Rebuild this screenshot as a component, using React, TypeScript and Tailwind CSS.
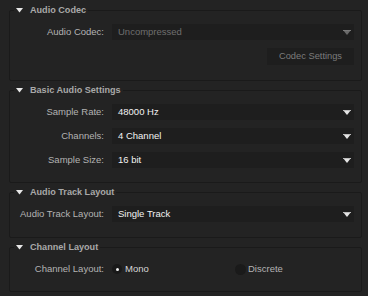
import React from "react";

const font = { fontFamily: '"Liberation Sans", Arial, sans-serif' };

function Tri() {
  return (
    <svg width="7" height="5" viewBox="0 0 7 5" className="shrink-0">
      <polygon points="0,0 7,0 3.5,4.5" fill="#e8e8e8" />
    </svg>
  );
}

function Arrow({ disabled }: { disabled?: boolean }) {
  return (
    <svg width="8" height="5" viewBox="0 0 8 5" className="shrink-0">
      <polygon points="0,0 8,0 4,5" fill={disabled ? "#6a6a6a" : "#e4e4e4"} />
      <rect x="0" y="0" width="8" height="1" fill={disabled ? "#7a7a7a" : "#bdbdbd"} />
    </svg>
  );
}

function Group({ title, children, pb }: { title: string; children: React.ReactNode; pb: string }) {
  return (
    <div className="border border-[#1a1a1a] rounded-[2px]">
      <div className="-mt-[7px] ml-[4px] flex w-fit items-center gap-[7px] bg-[#232323] px-[2px] h-[13px]">
        <Tri />
        <span className="text-[9.1px] font-bold text-[#a9a9a9] leading-[13px]">{title}</span>
      </div>
      <div className={"flex flex-col gap-2 pt-[7px] pr-[7px] " + pb}>{children}</div>
    </div>
  );
}

function Row({ label, children }: { label: string; children: React.ReactNode }) {
  return (
    <div className="flex items-center h-[16px]">
      <div className="w-[94px] shrink-0 text-right text-[9.5px] text-[#b3b3b3]">{label}</div>
      <div className="ml-2 flex-1 h-full">{children}</div>
    </div>
  );
}

function Select({ value, disabled }: { value: string; disabled?: boolean }) {
  return (
    <div className="flex h-full items-center justify-between bg-[#1e1e1e] pl-[6px] pr-[3px]">
      <span className={disabled ? "text-[9.5px] text-[#6f6f6f]" : "text-[9.5px] text-[#f2f2f2]"}>
        {value}
      </span>
      <Arrow disabled={disabled} />
    </div>
  );
}

export default function App() {
  return (
    <div className="w-[368px] h-[296px] bg-[#232323] pt-[10px] pl-[9px] pr-[6px]" style={font}>
      <div className="flex flex-col gap-[9px]">
        <Group title="Audio Codec" pb="pb-[15px]">
          <Row label="Audio Codec:">
            <Select value="Uncompressed" disabled />
          </Row>
          <div className="flex justify-end">
            <div className="flex h-[17px] w-[87px] items-center justify-center bg-[#1e1e1e] text-[9.3px] text-[#7c7c7c]">
              Codec Settings
            </div>
          </div>
        </Group>
        <Group title="Basic Audio Settings" pb="pb-[14px]">
          <Row label="Sample Rate:">
            <Select value="48000 Hz" />
          </Row>
          <Row label="Channels:">
            <Select value="4 Channel" />
          </Row>
          <Row label="Sample Size:">
            <Select value="16 bit" />
          </Row>
        </Group>
        <Group title="Audio Track Layout" pb="pb-[15px]">
          <Row label="Audio Track Layout:">
            <Select value="Single Track" />
          </Row>
        </Group>
        <Group title="Channel Layout" pb="pb-[14px]">
          <Row label="Channel Layout:">
            <div className="grid h-full grid-cols-2 items-center">
              <div className="flex items-center gap-[3px]">
                <div className="flex h-[10px] w-[10px] items-center justify-center rounded-full bg-[#191919]">
                  <div className="h-[3px] w-[3px] rounded-full bg-[#f0f0f0]" />
                </div>
                <span className="text-[9.5px] text-[#d6d6d6]">Mono</span>
              </div>
              <div className="flex items-center gap-[2px] pl-[2px]">
                <div className="h-[11px] w-[11px] rounded-full bg-[#1a1a1a]" />
                <span className="text-[9.5px] text-[#b3b3b3]">Discrete</span>
              </div>
            </div>
          </Row>
        </Group>
      </div>
    </div>
  );
}
